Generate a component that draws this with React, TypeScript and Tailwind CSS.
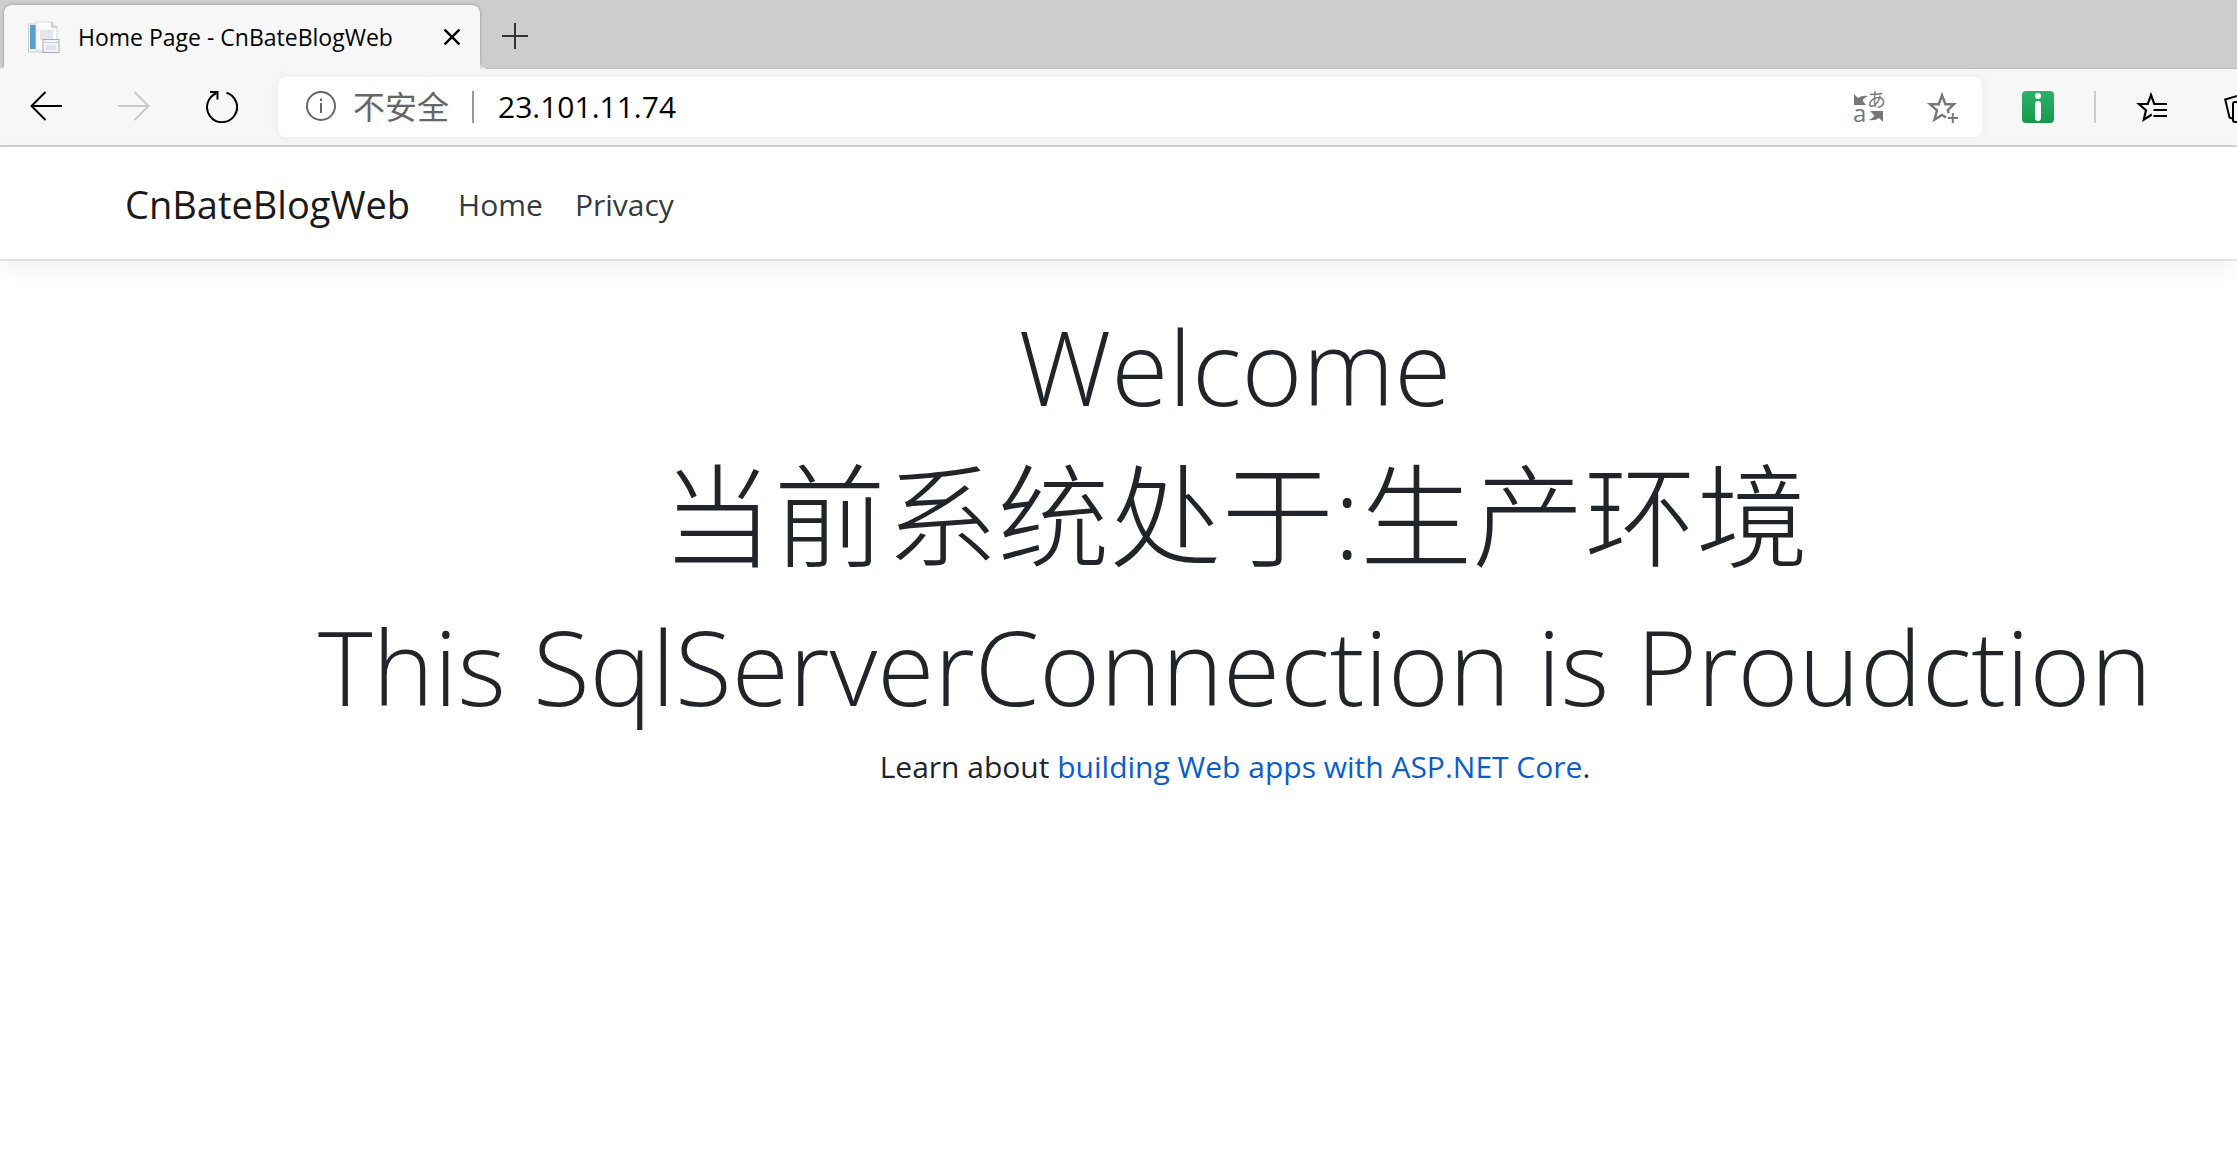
import { useState } from "react";

const navLinks = ["Home", "Privacy"];

const headings = [
  { text: "Welcome", size: "text-[104px]" },
  { text: "当前系统处于:生产环境", size: "text-[112px]" },
  { text: "This SqlServerConnection is Proudction", size: "text-[104px]" },
];

function Favicon() {
  return (
    <svg className="h-8 w-8 shrink-0" viewBox="0 0 32 32">
      <rect x="0.5" y="3" width="14" height="28" fill="#fff" stroke="#c3d0da" />
      <rect x="2" y="4" width="6" height="24" fill="#5ba0c9" />
      <path d="M8 1h16l5 5v24H8z" fill="#fcfcfd" stroke="#d5d8de" />
      <path d="M24 1v5h5" fill="#eceef2" stroke="#a9adb6" />
      <rect x="12" y="9" width="13" height="10" fill="#e3e7ec" />
      <rect x="15" y="18.5" width="16" height="13" fill="#f2f3f6" stroke="#a7aab5" />
      <path d="M15 21.5h16" stroke="#c9ccd4" />
      <rect x="18" y="24" width="10" height="5" fill="#dfe2e9" />
    </svg>
  );
}

function BackIcon() {
  return (
    <svg className="h-8 w-8" viewBox="0 0 32 32" fill="none" stroke="currentColor" strokeWidth="2">
      <path d="M32 15H1.500M15.500 1 1.500 15l14 14" />
    </svg>
  );
}

function ForwardIcon() {
  return (
    <svg className="h-8 w-8" viewBox="0 0 32 32" fill="none" stroke="currentColor" strokeWidth="2">
      <path d="M0 15h30.500M16.500 1l14 14-14 14" />
    </svg>
  );
}

function ReloadIcon() {
  return (
    <svg className="h-8 w-8" viewBox="0 0 32 32" fill="none" stroke="currentColor" strokeWidth="2">
      <path d="M20.500 1.800A15 15 0 1 1 10.500 2.200" />
      <path d="M4 1h7.500v7.500" />
    </svg>
  );
}

function InfoIcon() {
  return (
    <svg className="h-8 w-8 shrink-0" viewBox="0 0 32 32" fill="none" stroke="currentColor" strokeWidth="2">
      <circle cx="16" cy="15" r="14" />
      <path d="M16 12v10M16 7.500v2.500" />
    </svg>
  );
}

function TranslateIcon() {
  return (
    <svg className="h-8 w-8 overflow-visible" viewBox="0 0 32 32" fill="currentColor">
      <path d="M0 3l4 4q4-3 10-2-6 3-5 5l3 4H0z" />
      <path d="M29 31l-4-4q-4 3-10 2 6-3 5-5l-4-4h13z" />
      <text x="-1" y="31" fontSize="24" fontFamily="Open Sans, sans-serif">a</text>
      <text x="13" y="16" fontSize="19" fontFamily="Noto Sans CJK JP, sans-serif">あ</text>
    </svg>
  );
}

function StarAddIcon() {
  return (
    <svg className="h-8 w-8" viewBox="0 0 32 32" fill="none" stroke="currentColor" strokeWidth="2.400">
      <path d="M20 26.500 16 24 8.500 28.700 11 19.300 4 13.200h8.800L16 4.200l3.400 9H28l-6.200 6 .8 3" />
      <path d="M26.800 22v10M21.800 27H32" strokeWidth="2" />
    </svg>
  );
}

function FavoritesIcon() {
  return (
    <svg className="h-8 w-8" viewBox="0 0 32 32" fill="none" stroke="currentColor" strokeWidth="2.200">
      <path d="M15.800 23.500 7.800 28.700 10 19.300 3 13h8.800L15 4l3.300 9H31" />
      <path d="M17.500 19H31M17.500 25H31" strokeWidth="2" />
    </svg>
  );
}

function CollectionsIcon() {
  return (
    <svg className="h-8 w-8" viewBox="0 0 32 32" fill="none" stroke="currentColor" strokeWidth="2">
      <path d="M8 27.500 5.500 26.500 1.200 8.500 15 4.500l1.500 5" />
      <rect x="9" y="11" width="20" height="20" rx="2" />
    </svg>
  );
}

function TabStrip() {
  return (
    <div className="flex h-[69px] items-end bg-[#cdcdcd] shadow-[inset_0_-1px_0_#bdbdbd]">
      <span className="h-1 w-1 bg-[radial-gradient(circle_at_0_0,#cdcdcd_3px,#f7f7f7_4px)]" />
      <div className="flex h-16 w-[476px] items-center rounded-t-lg bg-[#f7f7f7] pr-3.5 pl-6 shadow-[0_0_3px_#8a8a8a] [clip-path:inset(-4px_-4px_0_-4px)]">
        <Favicon />
        <span className="ml-[18px] flex-1 text-[23px] whitespace-nowrap text-black">
          Home Page - CnBateBlogWeb
        </span>
        <button aria-label="Close tab" className="flex h-7 w-7 items-center justify-center text-black">
          <svg className="h-4 w-4" viewBox="0 0 16 16" stroke="currentColor" strokeWidth="2.400">
            <path d="M0.500 0.500l15 15M15.500 0.500l-15 15" />
          </svg>
        </button>
      </div>
      <span className="h-1.5 w-1.5 bg-[radial-gradient(circle_at_100%_0,#cdcdcd_5px,#f7f7f7_6px)]" />
      <button aria-label="New tab" className="flex h-16 w-[58px] items-center justify-center text-[#333]">
        <svg className="h-7 w-7" viewBox="0 0 28 28" stroke="currentColor" strokeWidth="2">
          <path d="M14 0v26M1 13h26" />
        </svg>
      </button>
    </div>
  );
}

function Toolbar() {
  const [url, setUrl] = useState("23.101.11.74");

  return (
    <div className="flex h-[78px] items-center overflow-hidden border-b-2 border-[#d0d0d0] bg-[#f7f7f7] text-black">
      <div className="flex w-[278px] shrink-0 gap-14 pl-[30px]">
        <button aria-label="Back">
          <BackIcon />
        </button>
        <button aria-label="Forward" className="text-[#c8c8c8]">
          <ForwardIcon />
        </button>
        <button aria-label="Reload">
          <ReloadIcon />
        </button>
      </div>
      <div className="flex h-[60px] flex-1 items-center rounded-lg bg-white pr-6 pl-[27px] text-[#666] shadow-[0_0_8px_#e9e9e9]">
        <InfoIcon />
        <label htmlFor="url" className="ml-4 text-[32px] whitespace-nowrap">
          不安全
        </label>
        <span className="ml-[23px] h-8 w-0.5 bg-[#999]" />
        <input
          id="url"
          value={url}
          onChange={(e) => setUrl(e.target.value)}
          className="ml-6 min-w-0 flex-1 bg-transparent pb-0.5 text-[30px] text-black outline-none"
        />
        <button aria-label="Translate" className="mr-10 text-[#777]">
          <TranslateIcon />
        </button>
        <button aria-label="Add to favorites" className="text-[#777]">
          <StarAddIcon />
        </button>
      </div>
      <div className="flex w-[255px] shrink-0 items-center gap-10 pl-10">
        <button
          aria-label="Extension"
          className="flex h-8 w-8 shrink-0 flex-col items-center rounded-sm bg-linear-to-b from-[#2bb066] to-[#149a4c] pt-0.5"
        >
          <span className="h-1.5 w-1.5 rounded-full bg-white" />
          <span className="mt-0.5 h-5 w-1.5 rounded-full bg-white" />
        </button>
        <span className="h-8 w-0.5 shrink-0 bg-[#ccc]" />
        <button aria-label="Favorites" className="shrink-0">
          <FavoritesIcon />
        </button>
        <button aria-label="Collections" className="ml-4 shrink-0">
          <CollectionsIcon />
        </button>
      </div>
    </div>
  );
}

export default function App() {
  return (
    <div className="min-h-screen overflow-hidden bg-white font-['Open_Sans','Noto_Sans_CJK_SC',sans-serif] text-[#212529]">
      <TabStrip />
      <Toolbar />
      <header className="border-b-2 border-[#dee2e6] bg-white shadow-[0_8px_24px_rgba(0,0,0,0.06)]">
        <nav className="flex h-28 items-center pt-0.5 pl-[125px]">
          <a href="#" className="mr-12 text-[38px] text-[#1a1a1a]">
            CnBateBlogWeb
          </a>
          <div className="flex gap-8 text-[30px] text-[#343a40]">
            {navLinks.map((link) => (
              <a key={link} href="#">
                {link}
              </a>
            ))}
          </div>
        </nav>
      </header>
      <main className="flex flex-col items-center pt-[38px] pl-[233px] whitespace-nowrap">
        {headings.map(({ text, size }) => (
          <h1 key={text} className={`mb-4 leading-[134px] font-light ${size}`}>
            {text}
          </h1>
        ))}
        <p className="text-[30px] leading-9">
          Learn about{" "}
          <a href="#" className="text-[#0b5ec9]">
            building Web apps with ASP.NET Core
          </a>
          .
        </p>
      </main>
    </div>
  );
}
